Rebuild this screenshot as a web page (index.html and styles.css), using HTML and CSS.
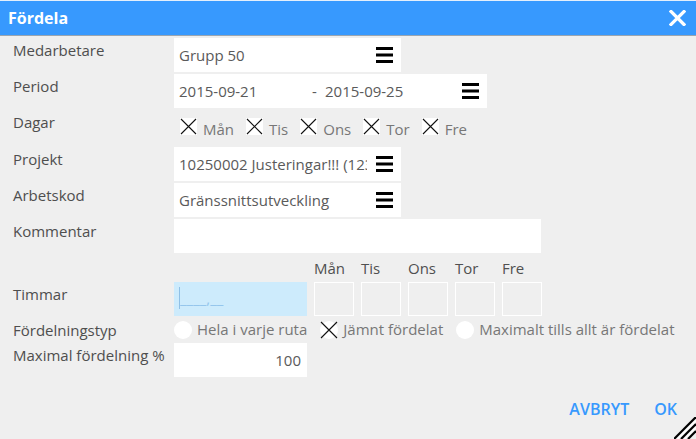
FILE: index.html
```html
<!DOCTYPE html>
<html lang="sv">
<head>
    <meta charset="UTF-8">
    <meta name="viewport" content="width=device-width, initial-scale=1.0">
    <title>Fördela</title>
    <link rel="stylesheet" href="styles.css">
</head>
<body>
    <div class="dialog">
        <header class="titlebar">
            <h1>Fördela</h1>
            <button class="close" title="Stäng">
                <svg width="17" height="16" viewBox="0 0 17 16"><path d="M2 1.5 L15 14.5 M15 1.5 L2 14.5" stroke="#fff" stroke-width="3.2" stroke-linecap="square"/></svg>
            </button>
        </header>

        <div class="form">
            <div class="label">Medarbetare</div>
            <div class="field w-mid">
                <span class="value">Grupp 50</span>
                <svg class="menu" width="17" height="16" viewBox="0 0 17 16"><rect y="0" width="17" height="3"/><rect y="6.5" width="17" height="3"/><rect y="13" width="17" height="3"/></svg>
            </div>

            <div class="label">Period</div>
            <div class="field w-wide">
                <span class="value date">2015-09-21</span>
                <span class="value dash">-</span>
                <span class="value">2015-09-25</span>
                <svg class="menu" width="17" height="16" viewBox="0 0 17 16"><rect y="0" width="17" height="3"/><rect y="6.5" width="17" height="3"/><rect y="13" width="17" height="3"/></svg>
            </div>

            <div class="label">Dagar</div>
            <div class="checks">
                <label class="check"><span class="box"><svg width="17" height="17" viewBox="0 0 17 17"><path d="M1 1 L16 16 M16 1 L1 16" stroke="#111" stroke-width="1.1"/></svg></span>Mån</label>
                <label class="check"><span class="box"><svg width="17" height="17" viewBox="0 0 17 17"><path d="M1 1 L16 16 M16 1 L1 16" stroke="#111" stroke-width="1.1"/></svg></span>Tis</label>
                <label class="check"><span class="box"><svg width="17" height="17" viewBox="0 0 17 17"><path d="M1 1 L16 16 M16 1 L1 16" stroke="#111" stroke-width="1.1"/></svg></span>Ons</label>
                <label class="check"><span class="box"><svg width="17" height="17" viewBox="0 0 17 17"><path d="M1 1 L16 16 M16 1 L1 16" stroke="#111" stroke-width="1.1"/></svg></span>Tor</label>
                <label class="check"><span class="box"><svg width="17" height="17" viewBox="0 0 17 17"><path d="M1 1 L16 16 M16 1 L1 16" stroke="#111" stroke-width="1.1"/></svg></span>Fre</label>
            </div>

            <div class="label">Projekt</div>
            <div class="field w-mid">
                <span class="value clip">10250002 Justeringar!!! (12345678)</span>
                <svg class="menu" width="17" height="16" viewBox="0 0 17 16"><rect y="0" width="17" height="3"/><rect y="6.5" width="17" height="3"/><rect y="13" width="17" height="3"/></svg>
            </div>

            <div class="label">Arbetskod</div>
            <div class="field w-mid">
                <span class="value">Gränssnittsutveckling</span>
                <svg class="menu" width="17" height="16" viewBox="0 0 17 16"><rect y="0" width="17" height="3"/><rect y="6.5" width="17" height="3"/><rect y="13" width="17" height="3"/></svg>
            </div>

            <div class="label">Kommentar</div>
            <div class="field w-comment"></div>

            <div class="label"></div>
            <div class="days day-heads">
                <span></span>
                <span>Mån</span>
                <span>Tis</span>
                <span>Ons</span>
                <span>Tor</span>
                <span>Fre</span>
            </div>

            <div class="label">Timmar</div>
            <div class="days">
                <div class="field hours"><span class="cursor"></span><span class="mask">____,__</span></div>
                <div class="daybox"></div>
                <div class="daybox"></div>
                <div class="daybox"></div>
                <div class="daybox"></div>
                <div class="daybox"></div>
            </div>

            <div class="label">Fördelningstyp</div>
            <div class="radios">
                <label class="radio"><span class="dot"></span>Hela i varje ruta</label>
                <label class="radio"><span class="dot"><svg width="18" height="18" viewBox="0 0 18 18"><path d="M1 1 L17 17 M17 1 L1 17" stroke="#111" stroke-width="1.1"/></svg></span>Jämnt fördelat</label>
                <label class="radio"><span class="dot"></span>Maximalt tills allt är fördelat</label>
            </div>

            <div class="label">Maximal fördelning %</div>
            <div class="field w-small num"><span class="value">100</span></div>
        </div>

        <div class="actions">
            <button class="action">AVBRYT</button>
            <button class="action">OK</button>
        </div>

        <svg class="resize" width="22" height="22" viewBox="0 0 22 22">
            <path d="M0 22 L22 0" stroke="#000" stroke-width="2.2"/>
            <path d="M3.5 22 L22 3.5" stroke="#fff" stroke-width="1.6"/>
            <path d="M7 22 L22 7" stroke="#000" stroke-width="2.2"/>
            <path d="M10.5 22 L22 10.5" stroke="#fff" stroke-width="1.6"/>
            <path d="M14 22 L22 14" stroke="#000" stroke-width="2.2"/>
        </svg>
    </div>
</body>
</html>
```

FILE: styles.css
```css
body {
    margin: 0;
    padding: 0;
    font-family: "Open Sans", "Liberation Sans", sans-serif;
    font-size: 15px;
    line-height: 20px;
    color: #505050;
    background-color: #efefef;
}
.dialog {
    position: relative;
    width: 696px;
    height: 439px;
    overflow: hidden;
    background-color: #efefef;
}
.titlebar {
    display: flex;
    align-items: center;
    justify-content: space-between;
    height: 34px;
    background-color: #3799fe;
    border-top: 1px solid #e4effb;
    border-bottom: 1px solid #9aa5b0;
}
.titlebar h1 {
    margin: 0 0 0 8px;
    font-size: 16px;
    font-weight: 700;
    line-height: 34px;
    color: white;
}
.close {
    display: flex;
    margin-right: 10px;
    padding: 0;
    border: none;
    background: none;
    cursor: pointer;
}
.form {
    display: grid;
    grid-template-columns: 161px auto;
    row-gap: 2px;
    padding: 2px 0 0 13px;
}
.label {
    padding-top: 2px;
    color: #4e4e4e;
    white-space: nowrap;
}
.field {
    display: flex;
    align-items: center;
    height: 34px;
    background-color: white;
    box-sizing: border-box;
    padding-left: 5px;
}
.w-mid { width: 227px; }
.w-wide { width: 313px; }
.w-comment { width: 367px; }
.w-small { width: 133px; }
.value {
    color: #5a5a5a;
    white-space: nowrap;
}
.value.date {
    width: 133px;
}
.value.dash {
    width: 13px;
}
.value.clip {
    width: 188px;
    overflow: hidden;
}
.menu {
    margin-left: auto;
    margin-right: 8px;
    fill: #000;
}
.checks {
    display: flex;
    gap: 12px;
    height: 35px;
    padding: 8px 0 0 6px;
    box-sizing: border-box;
}
.check {
    display: flex;
    align-items: flex-start;
    gap: 6px;
    padding-top: 1px;
    color: #777;
    line-height: 20px;
}
.check .box {
    display: flex;
    width: 17px;
    height: 17px;
    background-color: white;
    margin-top: -1px;
}
.days {
    display: grid;
    grid-template-columns: 133px repeat(5, 40px);
    column-gap: 7px;
}
.day-heads {
    height: 25px;
    padding-top: 3px;
    box-sizing: border-box;
    color: #505050;
}
.hours {
    background-color: #cdebfc;
    align-items: flex-start;
}
.cursor {
    width: 0;
    height: 22px;
    margin-top: 5px;
    border-left: 1px solid #8fc0e6;
}
.mask {
    margin-top: 6px;
    color: #94c5ec;
    font-size: 15px;
}
.daybox {
    height: 34px;
    border: 1px solid white;
    box-sizing: border-box;
}
.radios {
    display: flex;
    gap: 13px;
    height: 23px;
}
.radio {
    display: flex;
    align-items: flex-start;
    gap: 5px;
    padding-top: 1px;
    color: #777;
}
.radio .dot {
    display: flex;
    width: 18px;
    height: 18px;
    margin-top: 2px;
    border-radius: 50%;
    background-color: white;
}
.num {
    justify-content: flex-end;
    padding-right: 6px;
}
.actions {
    display: flex;
    justify-content: flex-end;
    gap: 25px;
    margin-top: 22px;
    padding-right: 19px;
}
.action {
    padding: 0;
    border: none;
    background: none;
    font-family: "Open Sans", "Liberation Sans", sans-serif;
    font-size: 16px;
    font-weight: 600;
    line-height: 20px;
    color: #3799fe;
    cursor: pointer;
}
.resize {
    position: absolute;
    right: 0;
    bottom: 0;
}
```
